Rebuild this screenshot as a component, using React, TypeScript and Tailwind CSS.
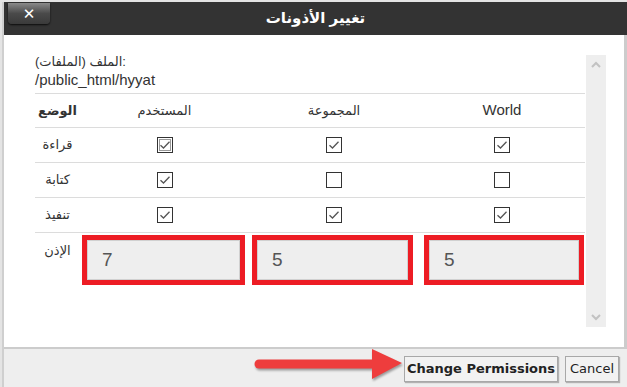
import React from "react";

const font = { fontFamily: '"Liberation Sans", "DejaVu Sans", sans-serif' };

const Check = ({ on, focus }: { on: boolean; focus?: boolean }) => (
  <svg width="16" height="16" viewBox="0 0 16 16">
    <rect x="0.5" y="0.5" width="15" height="15" fill="white" stroke="#333" />
    {focus && (
      <rect x="2.5" y="2.5" width="11" height="11" fill="none" stroke="#333" strokeDasharray="1 1" />
    )}
    {on && <path d="M3.5 8.2 L6.5 11 L12.5 4.8" fill="none" stroke="#555" strokeWidth="1.3" />}
  </svg>
);

const rows = [
  { label: "قراءة", v: [true, true, true] },
  { label: "كتابة", v: [true, false, false] },
  { label: "تنفيذ", v: [true, true, true] },
];

const Perm = ({ value, cls }: { value: string; cls: string }) => (
  <div className={`border-[5px] border-[#ed1c24] h-[50px] ${cls}`}>
    <div className="h-full bg-[#eeeeee] border border-[#d0d0d0] flex items-center pl-[14px] text-[19px] text-[#555]">
      {value}
    </div>
  </div>
);

export default function App() {
  return (
    <div className="w-[627px] h-[387px] bg-[#e4e4e4] pt-[2px] pl-[2px] relative overflow-hidden" style={font}>
      <div className="h-full flex flex-col border-l-2 border-[#cfcfcf]">
        <div className="h-[33px] bg-[#333333] relative flex items-center justify-center shrink-0">
          <div className="absolute left-[4px] top-[1px] w-[42px] h-[21px] rounded-b-[4px] bg-gradient-to-b from-[#8a8a8a] via-[#4a4a4a] to-[#3a3a3a] shadow-[0_1px_2px_rgba(0,0,0,0.8)] flex items-center justify-center text-white font-bold text-[15px] leading-none">
            ✕
          </div>
          <span className="text-white font-bold text-[15px]">تغيير الأذونات</span>
        </div>
        <div className="flex-1 bg-white flex border-r-[3px] border-[#cccccc]">
          <div className="w-[550px] ml-[31px] pt-[19px] text-[#333]">
            <div className="text-[13px] leading-[16px]">الملف (الملفات):</div>
            <div className="text-[15px] leading-[20px] mb-[3px]">/public_html/hyyat</div>
            <div className="border-t border-[#dcdcdc]">
              <div className="grid grid-cols-[45px_169px_170px_166px] h-[34px] border-b border-[#dcdcdc] items-center text-[13px]">
                <div className="text-center font-bold">الوضع</div>
                <div className="text-center">المستخدم</div>
                <div className="text-center">المجموعة</div>
                <div className="text-center text-[15px]">World</div>
              </div>
              {rows.map((r, i) => (
                <div key={r.label} className="grid grid-cols-[45px_169px_170px_166px] h-[35px] border-b border-[#dcdcdc] items-center text-[13px]">
                  <div className="text-center">{r.label}</div>
                  {r.v.map((on, j) => (
                    <div key={j} className="flex justify-center">
                      <Check on={on} focus={i === 0 && j === 0} />
                    </div>
                  ))}
                </div>
              ))}
              <div className="grid grid-cols-[45px_169px_170px_166px] pt-[2px] text-[13px]">
                <div className="text-center pt-[6px]">الإذن</div>
                <Perm value="7" cls="ml-[2px] mr-[4px]" />
                <Perm value="5" cls="ml-[3px] mr-[6px]" />
                <Perm value="5" cls="ml-[5px] mr-[1px]" />
              </div>
            </div>
          </div>
          <div className="ml-[1px] mt-[20px] w-[20px] h-[272px] bg-[#eeeeee] flex flex-col justify-between items-center py-[6px]">
            <svg width="10" height="7" viewBox="0 0 10 7">
              <path d="M1 6 L5 2 L9 6" fill="none" stroke="#c2c2c2" strokeWidth="2" />
            </svg>
            <svg width="10" height="7" viewBox="0 0 10 7">
              <path d="M1 1 L5 5 L9 1" fill="none" stroke="#c2c2c2" strokeWidth="2" />
            </svg>
          </div>
        </div>
        <div className="h-[40px] bg-[#eeeeee] border-t-2 border-[#cccccc] flex justify-end items-start pt-[7px] pr-[8px] gap-[7px] shrink-0" style={{ fontFamily: '"DejaVu Sans", Verdana, sans-serif' }}>
          <button className="h-[26px] w-[154px] bg-[#f2f2f2] border border-[#a8a8a8] shadow-[1px_1px_1px_rgba(0,0,0,0.25)] text-[13px] font-bold text-[#222]">
            Change Permissions
          </button>
          <button className="h-[26px] w-[54px] bg-[#f2f2f2] border border-[#a8a8a8] shadow-[1px_1px_1px_rgba(0,0,0,0.25)] text-[13px] text-[#222]">
            Cancel
          </button>
        </div>
      </div>
      <svg className="absolute left-[250px] top-[345px] drop-shadow-[1px_2px_1px_rgba(0,0,0,0.35)]" width="160" height="42" viewBox="0 0 160 42">
        <line x1="9" y1="19" x2="125" y2="19" stroke="#ee3d3d" strokeWidth="9" strokeLinecap="round" />
        <polygon points="122,4 152,18 122,34" fill="#ee3d3d" />
      </svg>
    </div>
  );
}
